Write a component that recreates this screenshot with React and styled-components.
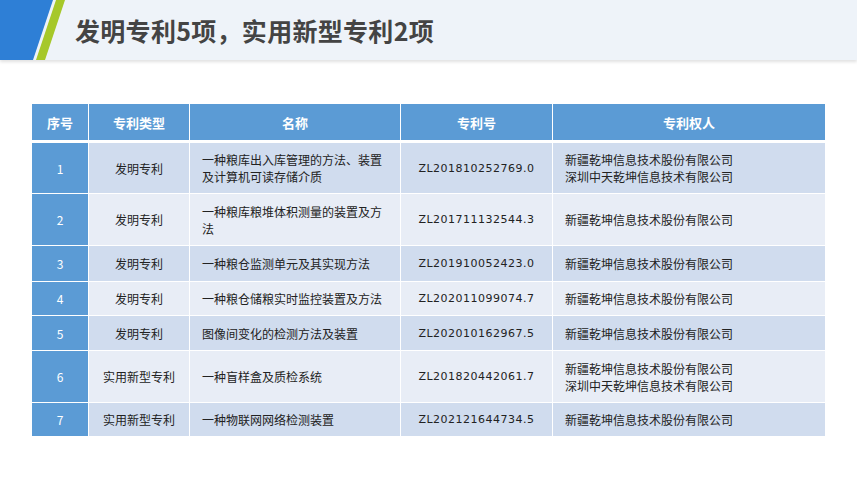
import React from "react";
import styled, { createGlobalStyle } from "styled-components";

const Global = createGlobalStyle`
  html, body { margin: 0; padding: 0; background: #fff; }
  body { font-family: "Noto Sans CJK SC", "Noto Sans", sans-serif; }
`;
const Page = styled.div`width: 857px; height: 479px; overflow: hidden; background: #fff;`;
const Header = styled.div`
  height: 60px; background: #eef3f9; display: flex; align-items: center;
  box-shadow: 0 2px 3px rgba(0,0,0,0.12); position: relative;
`;
const Deco = styled.svg`position: absolute; left: 0; top: 0;`;
const Title = styled.h1`
  margin: 0 0 0 75px; font-size: 25px; font-weight: 700; color: #444; letter-spacing: 0.3px;
`;
const Wrap = styled.div`padding: 44px 32px 0 31px;`;
const Table = styled.table`
  width: 795px; border-collapse: collapse; table-layout: fixed;
  font-size: 12px; color: #222;
`;
const Th = styled.th`
  background: #5b9bd5; color: #fff; font-weight: 700; font-size: 13px;
  height: 36px; border: 1.5px solid #fff; border-top: none; padding: 0;
  border-bottom-width: 3px;
`;
const Td = styled.td`
  background: ${p => p.$odd ? "#d0dcee" : "#e8edf6"};
  border: 1.5px solid #fff; padding: 0 12px; line-height: 17px;
  text-align: ${p => p.$left ? "left" : "center"};
  height: ${p => p.$h}px; box-sizing: border-box;
`;
const Num = styled(Td)`background: #5b9bd5; color: #fff; padding: 0;`;
const Pat = styled(Td)`font-family: "DejaVu Sans", sans-serif; font-size: 11px; letter-spacing: 0.5px;`;

const A = "新疆乾坤信息技术股份有限公司";
const B = "深圳中天乾坤信息技术有限公司";
const rows = [
  ["发明专利", ["一种粮库出入库管理的方法、装置", "及计算机可读存储介质"], "ZL201810252769.0", [A, B], 52],
  ["发明专利", ["一种粮库粮堆体积测量的装置及方", "法"], "ZL201711132544.3", [A], 52],
  ["发明专利", ["一种粮仓监测单元及其实现方法"], "ZL201910052423.0", [A], 36],
  ["发明专利", ["一种粮仓储粮实时监控装置及方法"], "ZL202011099074.7", [A], 34],
  ["发明专利", ["图像间变化的检测方法及装置"], "ZL202010162967.5", [A], 35],
  ["实用新型专利", ["一种盲样盒及质检系统"], "ZL201820442061.7", [A, B], 52],
  ["实用新型专利", ["一种物联网网络检测装置"], "ZL202121644734.5", [A], 34],
];

export default function App() {
  return (
    <Page>
      <Global />
      <Header>
        <Deco width="70" height="60" viewBox="0 0 70 60">
          <polygon points="0,0 53,0 33,60 0,60" fill="#2e7fd6" />
          <polygon points="56,0 65,0 45,60 36,60" fill="#a6c82a" />
        </Deco>
        <Title>发明专利5项，实用新型专利2项</Title>
      </Header>
      <Wrap>
        <Table>
          <colgroup>
            <col style={{ width: 57 }} /><col style={{ width: 101 }} /><col style={{ width: 211 }} />
            <col style={{ width: 152 }} /><col />
          </colgroup>
          <thead>
            <tr><Th>序号</Th><Th>专利类型</Th><Th>名称</Th><Th>专利号</Th><Th>专利权人</Th></tr>
          </thead>
          <tbody>
            {rows.map((r, i) => (
              <tr key={i}>
                <Num $h={r[4]}>{i + 1}</Num>
                <Td $odd={i % 2 === 0}>{r[0]}</Td>
                <Td $odd={i % 2 === 0} $left>{r[1].map((t, j) => <div key={j}>{t}</div>)}</Td>
                <Pat $odd={i % 2 === 0}>{r[2]}</Pat>
                <Td $odd={i % 2 === 0} $left>{r[3].map((t, j) => <div key={j}>{t}</div>)}</Td>
              </tr>
            ))}
          </tbody>
        </Table>
      </Wrap>
    </Page>
  );
}
